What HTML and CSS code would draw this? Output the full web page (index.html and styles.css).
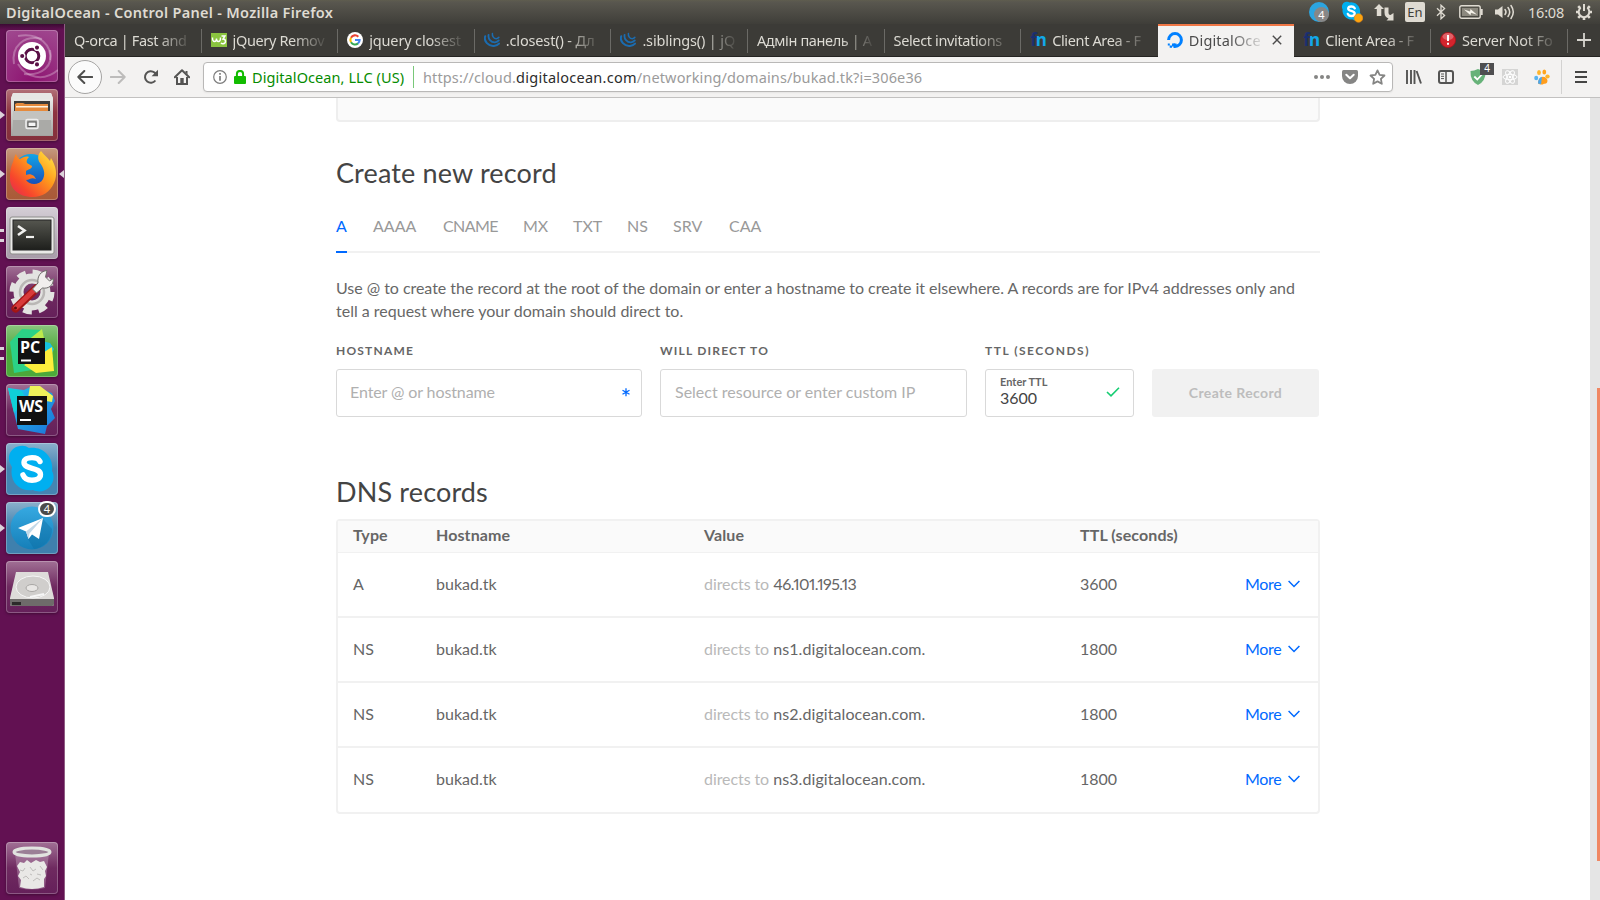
FILE: index.html
```html
<!DOCTYPE html>
<html lang="en">
<head>
<meta charset="utf-8">
<title>DigitalOcean - Control Panel</title>
<link rel="stylesheet" href="styles.css">
</head>
<body>
<svg class="defs" width="0" height="0" aria-hidden="true">
  <defs>
    <linearGradient id="metal" x1="0" y1="0" x2="0" y2="1"><stop offset="0" stop-color="#f4f4f2"/><stop offset="1" stop-color="#a3a3a0"/></linearGradient>
    <linearGradient id="fox" x1="1" y1="0" x2="0" y2="1"><stop offset="0" stop-color="#fff04a"/><stop offset=".4" stop-color="#ff9a1c"/><stop offset=".75" stop-color="#f7462c"/><stop offset="1" stop-color="#e2245a"/></linearGradient>
    <linearGradient id="globe" x1="0" y1="0" x2="0" y2="1"><stop offset="0" stop-color="#12a5e8"/><stop offset="1" stop-color="#1b3fae"/></linearGradient>
    <linearGradient id="tg" x1="0" y1="0" x2="0" y2="1"><stop offset="0" stop-color="#36a9e1"/><stop offset="1" stop-color="#157fb9"/></linearGradient>
    <linearGradient id="term" x1="0" y1="0" x2="0" y2="1"><stop offset="0" stop-color="#55564f"/><stop offset="1" stop-color="#1e1f1c"/></linearGradient>
    <linearGradient id="wsg" x1="0" y1="0" x2="1" y2="1"><stop offset="0" stop-color="#22c8ee"/><stop offset="1" stop-color="#1d72d8"/></linearGradient>
    <symbol id="jq" viewBox="0 0 16 16"><g fill="none" stroke="#1b6cb0" stroke-linecap="round"><path d="M1.200 4.200C-.5 9.200 4.500 14.500 10 13.900 12 13.700 14 12.800 15 11.600" stroke-width="2"/><path d="M4.600 2.800C3.800 6.800 7 10.500 11 10.300 12.800 10.200 14 9.400 14.800 8.400" stroke-width="1.800"/><path d="M8.400 1.500C8 4.200 9.800 6.600 12.300 6.700 13.500 6.700 14.300 6.100 14.900 5.300" stroke-width="1.500"/></g></symbol>
    <symbol id="chev" viewBox="0 0 12 8"><path d="M.6 1L6 6.500 11.400 1" fill="none" stroke="#0069ff" stroke-width="1.500"/></symbol>
  </defs>
</svg>
<div class="desktop">
  <header class="panel">
    <span class="panel-title">DigitalOcean - Control Panel - Mozilla Firefox</span>
    <div class="tray">
      <span class="tray-tg"><b>4</b></span>
      <svg class="t-skype" width="22" height="22" viewBox="0 0 22 22"><path d="M5.500.8a5 5 0 0 1 3.300.6A9 9 0 0 1 19 11.500a5.300 5.300 0 0 1-7.600 7A9 9 0 0 1 1.600 8.300 5 5 0 0 1 5.500.8z" fill="#00aff0"/><path d="M13.800 7.300C13 6 11.800 5.500 10.400 5.500 8.600 5.500 7.200 6.300 7.200 7.700 7.200 10.600 13.700 9.200 13.700 12.400 13.700 14 12.200 15 10.400 15 8.600 15 7.300 14.200 6.800 12.900" fill="none" stroke="#fff" stroke-width="2.300" stroke-linecap="round"/><circle cx="17.500" cy="17" r="4.300" fill="#fda50f" stroke="#f08a12" stroke-width=".6"/></svg>
      <svg class="t-net" width="20" height="18" viewBox="0 0 20 18"><path d="M5 1l5 5H7.300v7H2.800V6H0z" fill="#dfdbd2"/><path d="M10.500 4.500H14.500V10q0 2 2 2L19.500 10v7.500h-7l2-2q-4-1.500-4-6z" fill="#dfdbd2"/></svg>
      <span class="tray-lang">En</span>
      <svg class="t-bt" width="10" height="16" viewBox="0 0 10 16"><path d="M1 4.300L8.600 11.500 5 14.800V1.200L8.600 4.500 1 11.700" fill="none" stroke="#dfdbd2" stroke-width="1.300"/></svg>
      <svg class="t-bat" width="24" height="14" viewBox="0 0 24 14"><rect x=".8" y=".8" width="20.400" height="12.400" rx="1.800" fill="none" stroke="#dfdbd2" stroke-width="1.400"/><rect x="3" y="3" width="16" height="8" fill="#8b887e"/><rect x="21.500" y="4" width="2.200" height="6" fill="#dfdbd2"/><path d="M5 4.500l6 2 .5-2.500L18 9.800l-6-2-.5 2.400z" fill="#f5f2ea"/></svg>
      <svg class="t-vol" width="21" height="16" viewBox="0 0 21 16"><path d="M1 5.500h3L8.500 2v12L4 10.500H1z" fill="#dfdbd2"/><g fill="none" stroke="#dfdbd2" stroke-width="1.500" stroke-linecap="round"><path d="M11 5.500q2 2.500 0 5"/><path d="M14 3.500q3.400 4.500 0 9"/><path d="M17 1.500q4.600 6.500 0 13"/></g></svg>
      <span class="clock">16:08</span>
      <svg class="t-gear" width="18" height="18" viewBox="0 0 18 18"><g fill="none" stroke="#dfdbd2"><path d="M5.700 4.800a5.300 5.300 0 1 0 6.600 0" stroke-width="2"/><path d="M9 1v7" stroke-width="2"/><path d="M1 9h2.500M14.500 9H17M3.200 14.800l2-2M14.800 14.800l-2-2M3.200 3.200l2 2M14.800 3.200l-2 2M9 14.500V17" stroke-width="2.600"/></g></svg>
    </div>
  </header>
  <div class="main">
    <nav class="launcher">
      <div class="tile t-dash"><svg width="52" height="52" viewBox="0 0 52 52"><g fill="none" stroke="#fff" stroke-opacity=".28" stroke-width="2"><path d="M8 34C5 16 18 5 36 9"/><path d="M12 6C34 2 46 16 44 30"/><path d="M44 20C48 36 36 46 18 44"/><path d="M52 40C38 52 20 48 12 34"/></g><circle cx="26" cy="26" r="14" fill="#fff"/><circle cx="26" cy="26" r="6.800" fill="none" stroke="#5a1046" stroke-width="3"/><g stroke="#fff" stroke-width="1.300" fill="#5a1046"><circle cx="16.200" cy="26" r="2.700"/><circle cx="31" cy="17.600" r="2.700"/><circle cx="31" cy="34.400" r="2.700"/></g></svg></div>
      <div class="tile t-files run"><svg width="52" height="52" viewBox="0 0 52 52"><path d="M7 4h38l2 5v38H5V9z" fill="url(#metal)"/><path d="M7 4h38l2 6H5z" fill="#e6e6e4"/><rect x="8" y="12" width="36" height="12" fill="#3d3b38"/><path d="M9 15l2-1h6l2 1h23v8H9z" fill="#e58a3c"/><path d="M10 17h32v1.500H10z" fill="#fff3df"/><path d="M7 22h38v24H7z" fill="#aaaaa7"/><path d="M7 22h38v9H7z" fill="#c3c3c0"/><rect x="20" y="30.500" width="12" height="9" rx="1.500" fill="none" stroke="#eee" stroke-width="1.600"/><rect x="22" y="33" width="8" height="4.500" fill="#f5f5f5" stroke="#555"/></svg></div>
      <div class="tile t-fox run active"><svg width="52" height="52" viewBox="0 0 52 52"><circle cx="25" cy="24" r="18" fill="url(#globe)"/><path d="M7 14C8 10 9 7 10 6c1 3 2 4 4 5 3-2 6-3 9-2-2 2-3 4-2 6l5 3c0 3-3 3-6 5l0 4c3-1 5-1 8 1l2 3c-5-2-6 1-10 1 4 6 14 5 17-1 3-6 0-12-3-16-3-4-2-9 1-12 3 4 6 6 9 10l1-3c5 8 7 17 3 25-4 9-12 14-21 14C12 49 3 40 4 28c0-5 1-10 3-14z" fill="url(#fox)"/></svg></div>
      <div class="tile t-term run2"><svg width="52" height="52" viewBox="0 0 52 52"><rect x="4" y="10" width="44" height="37" rx="2" fill="#e9e9e7" stroke="#8d8d8a"/><rect x="7" y="13" width="38" height="30" fill="url(#term)" stroke="#222"/><path d="M12 19l6.500 4.500L12 28" fill="none" stroke="#f1f1ef" stroke-width="2.600"/><path d="M20 30h8" stroke="#f1f1ef" stroke-width="2.200"/></svg></div>
      <div class="tile t-set"><svg width="52" height="52" viewBox="0 0 52 52"><circle cx="26" cy="26" r="13.500" fill="none" stroke="#e3e3e1" stroke-width="10"/><circle cx="26" cy="26" r="20" fill="none" stroke="#e3e3e1" stroke-width="5" stroke-dasharray="8.700 7.010"/><circle cx="26" cy="26" r="12" fill="none" stroke="#b9b7b5" stroke-width="2.500"/><path d="M9.500 42.500L31 22" stroke="#a31515" stroke-width="8" stroke-linecap="round"/><path d="M10 41.500L31 21.500" stroke="#d83a3a" stroke-width="5" stroke-linecap="round"/><path d="M32 17c-1-7 3-12 9-12.500l-1.500 6.500 4 4 4-2.500c0 7-5 10.500-11 9.500l-6 5-4-4z" fill="#f1efed" stroke="#6f6d6b"/><circle cx="9.500" cy="42" r="1.500" fill="#5d0d0d"/></svg></div>
      <div class="tile t-pc run2"><svg width="52" height="52" viewBox="0 0 52 52"><path d="M4 17L16 4l20 1 2 38-30 5z" fill="#2bd287"/><path d="M36 4l3 14-18-2z" fill="#bce94c"/><path d="M36 16l8 2 4 6-8 16z" fill="#16c3e0"/><path d="M18 40L46 22l2 24-18 2z" fill="#fdee3c"/><rect x="12" y="13" width="27" height="26" fill="#111"/><path d="M15 35.500h10" stroke="#fff" stroke-width="2"/></svg><b class="jb jb-pc">PC</b></div>
      <div class="tile t-ws"><svg width="52" height="52" viewBox="0 0 52 52"><path d="M2 4l16 2 8-4 20 7 3 8-4 8 4 9-8 8-2 8-27-5z" fill="url(#wsg)"/><path d="M24 2h10l13 10-1 6-24-4z" fill="#eef25a"/><path d="M2 4l14 3 4 8-12 14z" fill="#0fd0d8"/><rect x="11" y="12" width="30" height="29" fill="#111"/><path d="M14 36h11" stroke="#fff" stroke-width="2"/></svg><b class="jb jb-ws">WS</b></div>
      <div class="tile t-sk run"><svg width="52" height="52" viewBox="0 0 52 52"><path d="M14 3q5-1 9 2c14-2 25 9 23 23 6 11-6 25-19 19C13 49 3 38 6 24-1 14 5 4 14 3z" fill="#00aff0"/><path d="M34 18.500C32.500 15.500 30 14.600 26 14.600c-4.500 0-8 1.700-8 5C18 27 34.500 23.500 34.500 31.500c0 4-4 5.700-8.500 5.700-5 0-7.700-2-9-5.300" fill="none" stroke="#fff" stroke-width="5.400" stroke-linecap="round"/></svg></div>
      <div class="tile t-tele run"><svg width="52" height="52" viewBox="0 0 52 52"><circle cx="26" cy="26" r="21.500" fill="url(#tg)"/><path d="M22 37l15-20 9 10c0 10-8 19-18 20z" fill="#0c6a9f" opacity=".35"/><path d="M12 26L37 16 33 37 26 32.500 22.500 37 20 29.500z" fill="#fff"/><path d="M20 29.500L37 16 23.500 31.500 22.500 37z" fill="#c3d9e8"/></svg><span class="badge">4</span></div>
      <div class="tile t-disk"><svg width="52" height="52" viewBox="0 0 52 52"><path d="M10 11h32l6 26v6q0 2-2 2H6q-2 0-2-2v-6z" fill="#dedcda"/><path d="M4 38h44v5q0 2-2 2H6q-2 0-2-2z" fill="#6e6b6a"/><path d="M6 41h9v3H6z" fill="#2c2a2a"/><ellipse cx="27" cy="26" rx="17" ry="11" fill="#d0cecc" stroke="#f6f6f6"/><ellipse cx="26" cy="27" rx="6" ry="3.500" fill="#e8e6e4" stroke="#a9a7a5"/><path d="M24 36l14-3" stroke="#f6f6f6" stroke-width="2"/></svg></div>
      <div class="tile t-trash"><svg width="52" height="52" viewBox="0 0 52 52"><path d="M9 11h34l-4 35q-13 3-26 0z" fill="#c9a9c2" opacity=".4"/><path d="M11 24l3-4 4 1 3-3 4 3 5-3 4 2 4-1 3 6-2 4 1 5-2 3v8q-12 4-24 0l1-7-3-4 2-4z" fill="#e9e8e6"/><path d="M14 28l3 1 2-3M24 25l3 4 3-2M34 24l3 4M17 36l3-2 3 3M27 39l4-3 3 2M24 32l2 1M31 32l4 1" fill="none" stroke="#bfbdbb"/><ellipse cx="26" cy="10" rx="18" ry="4" fill="#9b7f96" stroke="#e1e3df" stroke-width="3"/></svg></div>
    </nav>
    <div class="browser">
      <div class="tabs">
        <div class="tab first"><span class="lbl">Q-orca | Fast and</span></div>
        <div class="tab"><svg width="16" height="14" viewBox="0 0 16 14"><rect width="16" height="14" fill="#8ac43f"/><path d="M1.500 4.500q0 4 2 4t2-3q0 3 2 3t2-4M10.500 3H14L12 6q2.500 0 2.500 2.200T12 10.800q-1.300 0-2-1" fill="none" stroke="#fff" stroke-width="1.400"/></svg><span class="lbl">jQuery Remov</span></div>
        <div class="tab"><svg width="16" height="16" viewBox="0 0 16 16"><circle cx="8" cy="8" r="8" fill="#fff"/><g fill="none" stroke-width="2.100"><path d="M11.300 4.700A4.600 4.600 0 0 0 4 5.700" stroke="#ea4335"/><path d="M4 5.700a4.600 4.600 0 0 0 0 4.600" stroke="#fbbc05"/><path d="M4 10.300a4.600 4.600 0 0 0 7 1.100" stroke="#34a853"/><path d="M11 11.400A4.600 4.600 0 0 0 12.600 8H8" stroke="#4285f4"/></g></svg><span class="lbl wide">jquery closest</span></div>
        <div class="tab"><svg width="16" height="16"><use href="#jq"/></svg><span class="lbl wide">.closest() - Дл</span></div>
        <div class="tab"><svg width="16" height="16"><use href="#jq"/></svg><span class="lbl wide">.siblings() | jQ</span></div>
        <div class="tab"><span class="lbl">Адмін панель | A</span></div>
        <div class="tab"><span class="lbl">Select invitations</span></div>
        <div class="tab nosep"><span class="fn"><i>f</i>n</span><span class="lbl">Client Area - F</span></div>
        <div class="tab on"><svg width="16" height="16" viewBox="0 0 16 16"><path d="M1.600 8A6.400 6.400 0 1 1 8 14.400V11.500" fill="none" stroke="#0080ff" stroke-width="3"/><path d="M5 11.500h3v3H5zM2.700 13.500h2.300v2.300H2.700zM.8 11.500h2v2h-2z" fill="#0080ff"/></svg><span class="lbl">DigitalOce</span><svg class="close" width="10" height="10" viewBox="0 0 10 10"><path d="M.8.800l8.400 8.400M9.200.8L.8 9.200" stroke="#4c4c4c" stroke-width="1.400"/></svg></div>
        <div class="tab"><span class="fn"><i>f</i>n</span><span class="lbl">Client Area - F</span></div>
        <div class="tab"><svg width="16" height="16" viewBox="0 0 16 16"><circle cx="8" cy="8" r="7.600" fill="#d3242d" stroke="#a8141c" stroke-width=".8"/><ellipse cx="8" cy="4.500" rx="5.500" ry="3.500" fill="#fff" opacity=".28"/><path d="M8 3v6M8 10.700v2" stroke="#fff" stroke-width="2"/></svg><span class="lbl wide">Server Not Fo</span></div>
        <svg class="plus" width="14" height="14" viewBox="0 0 14 14"><path d="M7 0v14M0 7h14" stroke="#d8d6d0" stroke-width="1.800"/></svg>
      </div>
      <div class="toolbar">
        <span class="back"><svg width="16" height="14" viewBox="0 0 16 14"><path d="M15.200 7H1.500M7.300 1L1.300 7l6 6" fill="none" stroke="#4f4f4e" stroke-width="2" stroke-linecap="round" stroke-linejoin="round"/></svg></span>
        <svg class="fwd" width="16" height="14" viewBox="0 0 16 14"><path d="M.8 7h13.700M8.700 1l6 6-6 6" fill="none" stroke="#bdbcbb" stroke-width="2" stroke-linecap="round" stroke-linejoin="round"/></svg>
        <svg class="reload" width="16" height="16" viewBox="0 0 16 16"><path d="M12.400 11.500A5.800 5.800 0 1 1 11.500 3.500L13.300 5.300" fill="none" stroke="#545453" stroke-width="2"/><path d="M15 .8v6.400H8.600z" fill="#545453"/></svg>
        <svg class="home" width="16" height="16" viewBox="0 0 16 16"><path d="M.8 8.300L8 1.200l7.200 7.100" fill="none" stroke="#545453" stroke-width="2" stroke-linecap="round" stroke-linejoin="round"/><path d="M3 8v7h10V8" fill="none" stroke="#545453" stroke-width="2"/><path d="M6.300 14.500V9h3.400v5.500zM11.500 2h2v3.500l-2-2z" fill="#545453"/></svg>
        <div class="urlbar">
          <svg class="info" width="14" height="14" viewBox="0 0 14 14"><circle cx="7" cy="7" r="6.300" fill="none" stroke="#7d7d7d" stroke-width="1.200"/><path d="M7 3v1.800M7 6v4.800" stroke="#7d7d7d" stroke-width="1.700"/></svg>
          <svg class="lock" width="12" height="14" viewBox="0 0 12 14"><rect y="6" width="12" height="8" rx="1" fill="#12bc00"/><path d="M2.900 7V4a3.100 3.100 0 0 1 6.200 0v3" fill="none" stroke="#12bc00" stroke-width="2"/></svg>
          <span class="ev">DigitalOcean, LLC (US)</span>
          <span class="url"><span>https://cloud.</span><b>digitalocean.com</b><span>/networking/domains/bukad.tk?i=306e36</span></span>
          <svg class="dots" width="16" height="4" viewBox="0 0 16 4"><g fill="#858584"><circle cx="2" cy="2" r="2"/><circle cx="8" cy="2" r="2"/><circle cx="14" cy="2" r="2"/></g></svg>
          <svg class="pocket" width="16" height="14" viewBox="0 0 16 14"><path d="M1.500 0h13Q16 0 16 1.500V6a8 8 0 0 1-16 0V1.500Q0 0 1.500 0z" fill="#858584"/><path d="M4.300 4.700L8 8.300l3.700-3.600" fill="none" stroke="#fff" stroke-width="2" stroke-linecap="round" stroke-linejoin="round"/></svg>
          <svg class="star" width="17" height="16" viewBox="0 0 17 16"><path d="M8.500 1.400l2.100 4.500 4.900.6-3.600 3.400.9 4.900-4.300-2.400-4.300 2.400.9-4.900L1.500 6.500l4.900-.6z" fill="none" stroke="#858584" stroke-width="1.800" stroke-linejoin="round"/></svg>
        </div>
        <svg class="lib" width="16" height="14" viewBox="0 0 16 14"><path d="M1 0v14M5 0v14M8.500 0v14M10.600 1L15 13.500" stroke="#545453" stroke-width="1.900"/></svg>
        <svg class="side" width="16" height="14" viewBox="0 0 16 14"><rect x="1" y="1" width="14" height="12" rx="2" fill="none" stroke="#545453" stroke-width="2"/><path d="M8 1v12" stroke="#545453" stroke-width="1.500"/><path d="M3 4h3M3 6.300h3M3 8.600h3" stroke="#545453"/></svg>
        <span class="shield"><svg width="16" height="16" viewBox="0 0 16 16"><path d="M8 0Q12 2 15.500 2 16 12 8 16 0 12 .5 2 4 2 8 0z" fill="#67b279"/><path d="M4.300 7.500l3 3 5-5.500" fill="none" stroke="#fff" stroke-width="1.800"/></svg><i>4</i></span>
        <svg class="react" width="16" height="16" viewBox="0 0 16 16"><rect width="16" height="16" fill="#d5d5d4"/><g fill="none" stroke="#fff"><ellipse cx="8" cy="8" rx="7" ry="2.700"/><ellipse cx="8" cy="8" rx="7" ry="2.700" transform="rotate(60 8 8)"/><ellipse cx="8" cy="8" rx="7" ry="2.700" transform="rotate(120 8 8)"/></g><circle cx="8" cy="8" r="1.300" fill="#fff"/></svg>
        <svg class="paw" width="16" height="16" viewBox="0 0 16 16"><ellipse cx="5" cy="3.500" rx="1.900" ry="2.500" fill="#ffb52b"/><ellipse cx="10.300" cy="3" rx="1.900" ry="2.600" fill="#ffa51f"/><ellipse cx="13.500" cy="7.500" rx="2.200" ry="1.900" fill="#ffb52b"/><ellipse cx="2.200" cy="9" rx="2" ry="2.300" fill="#58b4f0"/><path d="M4 14.500Q4 9 8.500 7.700q4.500.3 5 4-.2 3.500-3.500 3Q7 16.500 4 14.500z" fill="#ff9d1c"/><path d="M4 14.500Q4 9 8 7.800l-1 7.400z" fill="#4aa7ee"/></svg>
        <span class="menu"><svg width="12" height="12" viewBox="0 0 12 12"><path d="M0 1h12M0 6h12M0 11h12" stroke="#454544" stroke-width="1.900"/></svg></span>
      </div>
      <div class="viewport">
        <main class="page">
          <div class="prev-card"></div>
          <h2 class="h-create">Create new record</h2>
          <div class="types"><a class="sel">A</a><a>AAAA</a><a class="cn">CNAME</a><a>MX</a><a>TXT</a><a>NS</a><a>SRV</a><a>CAA</a></div>
          <p class="help"><span class="l1">Use @ to create the record at the root of the domain or enter a hostname to create it elsewhere. A records are for IPv4 addresses only and</span><br><span>tell a request where your domain should direct to.</span></p>
          <div class="form">
            <div class="field"><label>HOSTNAME</label><div class="input req"><span class="ph">Enter @ or hostname</span><svg width="8" height="9" viewBox="0 0 8 9"><path d="M4 .3v8M.5 2.300l7 4M7.500 2.300l-7 4" stroke="#0069ff" stroke-width="1.300"/></svg></div></div>
            <div class="field"><label>WILL DIRECT TO</label><div class="input"><span class="ph ph2">Select resource or enter custom IP</span></div></div>
            <div class="field"><label class="wide">TTL (SECONDS)</label><div class="input"><span class="ttl"><small>Enter TTL</small><span>3600</span></span><svg width="14" height="10" viewBox="0 0 14 10"><path d="M1 5l4 3.800L13 .8" fill="none" stroke="#15cd72" stroke-width="1.600"/></svg></div></div>
            <div class="btn">Create Record</div>
          </div>
          <h2 class="h-dns">DNS records</h2>
          <div class="table">
            <div class="row head"><span>Type</span><span>Hostname</span><span>Value</span><span>TTL (seconds)</span><span></span></div>
            <div class="row"><span>A</span><span>bukad.tk</span><span><em>directs to</em> <span class="ip">46.101.195.13</span></span><span>3600</span><a>More<svg width="12" height="8"><use href="#chev"/></svg></a></div>
            <div class="row"><span>NS</span><span>bukad.tk</span><span><em>directs to</em> <span class="ns">ns1.digitalocean.com.</span></span><span>1800</span><a>More<svg width="12" height="8"><use href="#chev"/></svg></a></div>
            <div class="row"><span>NS</span><span>bukad.tk</span><span><em>directs to</em> <span class="ns">ns2.digitalocean.com.</span></span><span>1800</span><a>More<svg width="12" height="8"><use href="#chev"/></svg></a></div>
            <div class="row"><span>NS</span><span>bukad.tk</span><span><em>directs to</em> <span class="ns">ns3.digitalocean.com.</span></span><span>1800</span><a>More<svg width="12" height="8"><use href="#chev"/></svg></a></div>
          </div>
        </main>
        <div class="scroll"><div class="thumb"></div></div>
      </div>
    </div>
  </div>
</div>
</body>
</html>
```
FILE: styles.css
```css
* { box-sizing: border-box; }
body { margin: 0; font-family: Lato, "Open Sans", sans-serif; font-size: 16px; color: #666; background: #fff; }
svg { display: block; flex: none; }
.defs { position: absolute; }
.desktop { width: 1600px; height: 900px; overflow: hidden; display: flex; flex-direction: column; }

/* top panel */
.panel { height: 24px; flex: none; display: flex; align-items: center; justify-content: space-between; padding: 0 7px 0 6px; background: linear-gradient(#5f5d4e 0, #59574f 2px, #3f3e39 100%); color: #dfdbd2; font-family: "Noto Sans", sans-serif; font-size: 14px; white-space: nowrap; }
.panel-title { font-weight: 600; font-size: 14.500px; line-height: 20px; letter-spacing: .3px; padding-bottom: 1px; }
.tray { display: flex; align-items: center; }
.tray-tg { width: 20px; height: 20px; border-radius: 50%; background: #2ca5e0; display: flex; align-items: flex-end; justify-content: flex-end; }
.tray-tg b { width: 15px; height: 15px; border-radius: 50%; background: #878787; color: #fff; font: 11px/15px "Noto Sans", sans-serif; text-align: center; }
.t-skype { margin-left: 12px; }
.t-net { margin-left: 11px; }
.tray-lang { margin-left: 11px; width: 20px; height: 20px; border-radius: 2px; background: #dfdbd2; color: #3f3e39; font-size: 13px; line-height: 20px; text-align: center; }
.t-bt { margin-left: 11px; }
.t-bat { margin-left: 13px; }
.t-vol { margin-left: 11px; }
.clock { margin-left: 13px; width: 36px; font-size: 14.500px; letter-spacing: -.2px; }
.t-gear { margin-left: 11px; }

/* launcher */
.main { flex: 1; display: flex; min-height: 0; }
.launcher { width: 65px; flex: none; padding: 6px 7px 6px 6px; border-right: 1px solid #8f5c83; background: linear-gradient(#3b0a33 0, #621152 6px); display: flex; flex-direction: column; gap: 7px; }
.tile { position: relative; width: 52px; height: 52px; flex: none; border-radius: 4px; box-shadow: inset 0 0 0 1px rgba(255,255,255,.25), 0 1px 3px rgba(0,0,0,.35); background: linear-gradient(#a17095, #6f2a60 50%, #65205a); }
.tile.t-dash { background: radial-gradient(circle at 50% 100%, #8d1270, #a04a90); }
.tile.t-files { background: linear-gradient(#b27078, #8d3440 45%, #84303c); }
.tile.t-fox { background: linear-gradient(#c59a80, #b1633f 50%, #a95a38); }
.tile.t-term { background: linear-gradient(#d5cfd6, #b7aeb9 60%, #a79ba8); }
.tile.t-pc { background: linear-gradient(#8bc47e, #4ca93a 50%); }
.tile.t-sk { background: linear-gradient(#8cb0cc, #4585b2 50%); }
.tile.t-tele { background: linear-gradient(#8cb0cc, #3f80ad 50%); }
.tile.t-trash { margin-top: auto; }
.run::before, .run2::before { content: ""; position: absolute; left: -6px; top: 22px; border: 4px solid transparent; border-left: 5px solid #dcd3da; border-right: 0; }
.run2::before { border: 0; width: 4px; height: 7px; border-top: 3px solid #dcd3da; border-bottom: 3px solid #dcd3da; }
.active::after { content: ""; position: absolute; right: -6px; top: 22px; border: 4px solid transparent; border-right: 5px solid #dcd3da; border-left: 0; }
.jb { position: absolute; color: #fff; font: bold 16px/16px "Open Sans", sans-serif; }
.jb-pc { left: 14px; top: 14px; }
.jb-ws { left: 13px; top: 14px; letter-spacing: -.3px; }
.badge { position: absolute; left: 32px; top: -1px; width: 18px; height: 16px; border: 2px solid #fff; border-radius: 8px; background: #4c4c4a; color: #fff; font: 11px/12px "Noto Sans", sans-serif; text-align: center; }

/* browser chrome */
.browser { flex: 1; min-width: 0; display: flex; flex-direction: column; font-family: "Noto Sans", sans-serif; }
.tabs { height: 33px; flex: none; display: flex; background: #3c3b37; border-bottom: 1px solid #252422; }
.tab { position: relative; width: 136.600px; flex: none; display: flex; align-items: center; padding: 0 9px; gap: 6px; color: #dcdad3; font-size: 14.500px; white-space: nowrap; }
.tab::after { content: ""; position: absolute; right: 0; top: 5px; width: 1px; height: 24px; background: #6b6a66; }
.tab.on::after, .tab.nosep::after { display: none; }
.tab .lbl { flex: 1; min-width: 0; letter-spacing: -.36px; -webkit-mask-image: linear-gradient(90deg, #000 calc(100% - 36px), transparent); mask-image: linear-gradient(90deg, #000 calc(100% - 36px), transparent); }
.tab .lbl.wide { letter-spacing: -.15px; }
.tab.on { height: 33px; background: #f3f2f1; border-top: 2px solid #f07746; color: #4c4c4c; padding: 0 12px 3px 9px; }
.tab.on .lbl { letter-spacing: .15px; }
.fn { width: 16px; font: bold 17px/18px "Noto Sans", sans-serif; color: #12a8e8; letter-spacing: -1px; }
.fn i { font-style: normal; color: #1b2f6e; }
.plus { margin: 9px 0 0 9px; }
.toolbar { height: 41px; flex: none; display: flex; align-items: center; background: #f3f2f1; border-bottom: 1px solid #c2c1c0; padding-left: 3px; }
.back { width: 34px; height: 34px; border: 1px solid #a5a4a3; border-radius: 50%; background: #fbfbfb; display: flex; align-items: center; justify-content: center; }
.fwd { margin-left: 8px; }
.reload { margin-left: 17px; }
.home { margin-left: 15px; }
.urlbar { margin-left: 13px; width: 1190px; height: 30px; flex: none; border: 1px solid #b9b8b7; border-radius: 4px; background: #fff; display: flex; align-items: center; font-size: 14.500px; white-space: nowrap; box-shadow: 0 1px 2px rgba(0,0,0,.06); }
.info { margin-left: 9px; }
.lock { margin-left: 7px; }
.ev { margin-left: 6px; width: 162px; height: 22px; line-height: 22px; color: #058b00; border-right: 1px solid #79c879; letter-spacing: .08px; }
.url { margin-left: 9px; width: 891px; flex: none; color: #9b9b9b; letter-spacing: .13px; }
.url b { font-weight: 400; color: #2c2c2c; letter-spacing: .26px; }
.pocket { margin-left: 12px; }
.star { margin-left: 11px; }
.lib { margin-left: 13px; }
.side { margin-left: 16px; }
.shield { position: relative; margin-left: 16px; }
.shield i { position: absolute; left: 10px; top: -6px; width: 14px; height: 12px; background: #4e4e50; color: #fff; font: 10px/11px "Noto Sans", sans-serif; text-align: center; }
.react { margin-left: 16px; }
.paw { margin-left: 16px; }
.menu { margin-left: 11px; height: 34px; border-left: 1px solid #d3d2d1; padding: 11px 0 0 13px; }

/* page */
.viewport { flex: 1; min-height: 0; display: flex; justify-content: space-between; font-family: Lato, sans-serif; }
.page { width: 984px; margin-left: 271px; }
.scroll { width: 10px; background: #e5e5e5; display: flex; justify-content: flex-end; }
.thumb { width: 3px; height: 473px; margin-top: 290px; background: #f08763; }
.prev-card { height: 24px; border: 2px solid #eee; border-top: 0; border-radius: 0 0 4px 4px; background: #fafafa; }
h2 { margin: 0; font-weight: 400; font-size: 27px; line-height: 32px; color: #444; letter-spacing: .15px; white-space: nowrap; }
.h-create { margin-top: 35px; }
.types { margin-top: 21px; height: 43px; display: grid; grid-template-columns: 11px 44px 54px 24px 28px 20px 30px 33px; column-gap: 26px; border-bottom: 2px solid #f1f1f1; line-height: 31px; color: #999; white-space: nowrap; }
.types a { height: 43px; }
.types .cn { letter-spacing: -.6px; }
.types .sel { color: #0069ff; border-bottom: 2px solid #0069ff; }
.help { margin: 23px 0 0; line-height: 23px; white-space: nowrap; color: #676767; }
.help .l1 { letter-spacing: -.034px; }
.form { margin-top: 21px; display: grid; grid-template-columns: 306px 307px 149px 167px; column-gap: 18px; align-items: end; }
.field label { display: block; font-weight: 700; font-size: 12px; line-height: 16px; letter-spacing: 1.200px; margin-bottom: 10px; white-space: nowrap; }
.field label.wide { letter-spacing: 1.500px; }
.input { height: 48px; border: 1px solid #d9d9d9; border-radius: 3px; display: flex; align-items: center; justify-content: space-between; padding: 0 13px 2px 14px; background: #fff; }
.input.req { padding-right: 11px; }
.ph { color: #b0b0b0; margin-left: -1px; letter-spacing: -.1px; white-space: nowrap; padding-bottom: 1px; }
.ph2 { margin-left: 0; letter-spacing: 0; }
.ttl { color: #444; line-height: 17px; padding-bottom: 2px; }
.ttl small { display: block; font-weight: 700; font-size: 11px; line-height: 13px; color: #666; }
.ttl span { display: block; line-height: 19px; }
.btn { height: 48px; border-radius: 3px; background: #f1f1f1; color: #bdbdbd; font-weight: 700; font-size: 14px; line-height: 48px; letter-spacing: .38px; text-align: center; }
.h-dns { margin-top: 59px; }
.table { margin-top: 11px; border: 2px solid #f1f1f1; border-radius: 4px; }
.row { height: 65px; display: grid; grid-template-columns: 83px 268px 376px 165px 1fr; align-items: center; padding: 0 0 2px 15px; border-bottom: 2px solid #f1f1f1; white-space: nowrap; }
.row:last-child { height: 64px; border-bottom: 0; padding-bottom: 3px; }
.row.head { height: 32px; border-bottom-width: 1px; background: #fafafa; font-weight: 700; padding-bottom: 4px; letter-spacing: .1px; }
.row em { font-style: normal; color: #b9b9b9; letter-spacing: -.08px; }
.row .ip { font-feature-settings: "pnum"; letter-spacing: -.560px; }
.row .ns { letter-spacing: .08px; }
.row a { color: #0069ff; display: flex; align-items: center; gap: 7px; letter-spacing: -.3px; }
```
